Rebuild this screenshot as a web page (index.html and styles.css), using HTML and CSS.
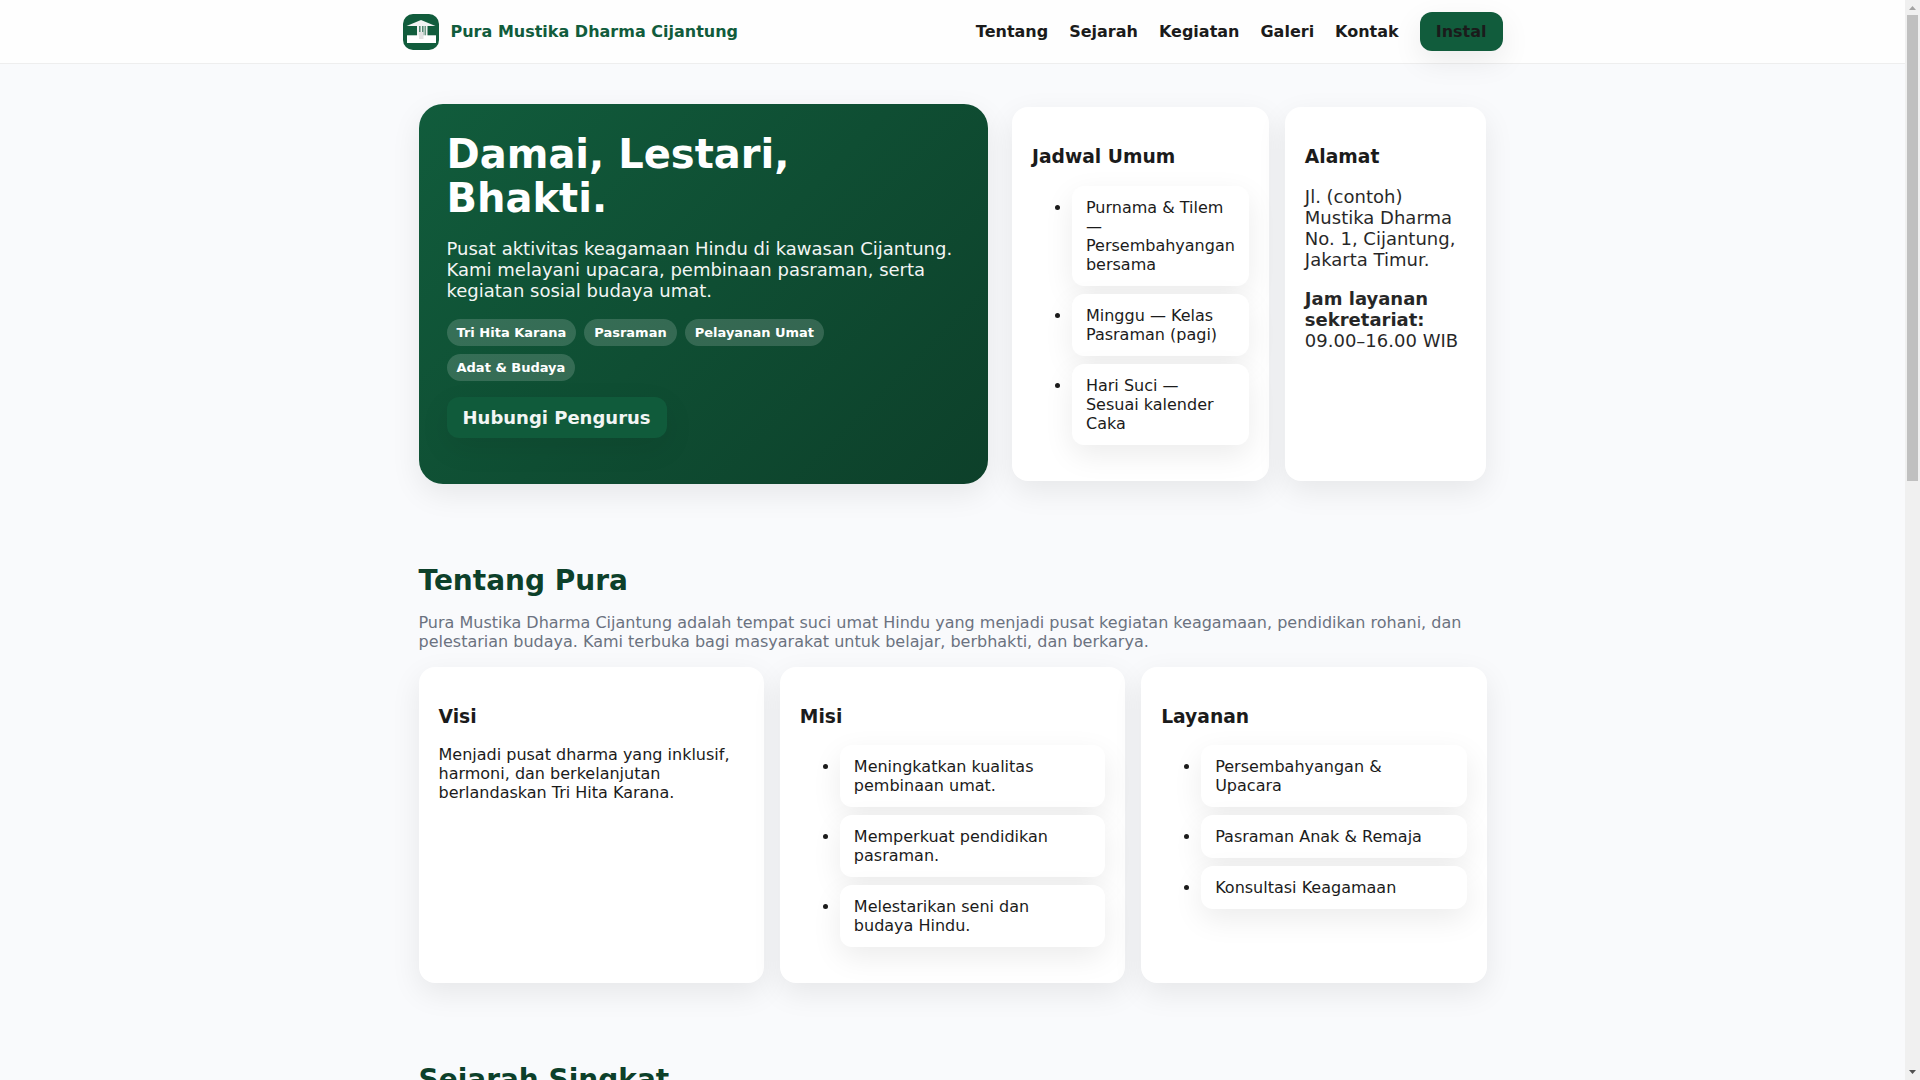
FILE: index.html
```html
<!DOCTYPE html>
<html lang="id">
<head>
    <meta charset="UTF-8">
    <meta name="viewport" content="width=device-width, initial-scale=1.0">
    <meta name="theme-color" content="#115c3c">
    <title>Pura Mustika Dharma Cijantung</title>
    <link rel="stylesheet" href="styles.css">
</head>
<body>
    <div class="page">
        <header class="header">
            <div class="nav">
                <a class="brand" href="#">
                    <svg class="logo" viewBox="0 0 36 36" aria-hidden="true">
                        <rect width="36" height="36" rx="10" fill="#115c3c"/>
                        <path d="M18 6 32.500 12H3.500Z" fill="#f2f2f2"/>
                        <path d="M14 12h2.300v10H14zM17.400 12h1.900v10h-1.900zM20.400 12h1.300v10h-1.300zM22.600 12h1.900v10h-1.900z" fill="#f2f2f2"/>
                        <rect x="4" y="21.300" width="29" height="7.700" fill="#fff"/>
                        <rect x="16" y="18" width="4.500" height="7" fill="#e2e2e2"/>
                    </svg>
                    <span>Pura Mustika Dharma Cijantung</span>
                </a>
                <nav class="menu">
                    <a href="#tentang">Tentang</a>
                    <a href="#sejarah">Sejarah</a>
                    <a href="#kegiatan">Kegiatan</a>
                    <a href="#galeri">Galeri</a>
                    <a href="#kontak">Kontak</a>
                    <a href="#" class="btn">Instal</a>
                </nav>
            </div>
        </header>

        <main>
            <!-- Hero -->
            <section class="section hero">
                <div class="hero-card">
                    <h1>Damai, Lestari, Bhakti.</h1>
                    <p>Pusat aktivitas keagamaan Hindu di kawasan Cijantung. Kami melayani upacara, pembinaan pasraman, serta kegiatan sosial budaya umat.</p>
                    <div class="badges">
                        <span class="badge">Tri Hita Karana</span>
                        <span class="badge">Pasraman</span>
                        <span class="badge">Pelayanan Umat</span>
                        <span class="badge">Adat &amp; Budaya</span>
                    </div>
                    <p class="cta"><a class="btn" href="#kontak">Hubungi Pengurus</a></p>
                </div>
                <div class="info">
                    <div class="card">
                        <h3>Jadwal Umum</h3>
                        <ul class="list">
                            <li>Purnama &amp; Tilem — Persembahyangan bersama</li>
                            <li>Minggu — Kelas Pasraman (pagi)</li>
                            <li>Hari Suci — Sesuai kalender Caka</li>
                        </ul>
                    </div>
                    <div class="card">
                        <h3>Alamat</h3>
                        <p>Jl. (contoh) Mustika Dharma No. 1, Cijantung, Jakarta Timur.</p>
                        <p><strong>Jam layanan sekretariat:</strong> 09.00–16.00 WIB</p>
                    </div>
                </div>
            </section>

            <!-- Tentang -->
            <section class="section" id="tentang">
                <h2>Tentang Pura</h2>
                <p class="muted">Pura Mustika Dharma Cijantung adalah tempat suci umat Hindu yang menjadi pusat kegiatan keagamaan, pendidikan rohani, dan pelestarian budaya. Kami terbuka bagi masyarakat untuk belajar, berbhakti, dan berkarya.</p>
                <div class="cards">
                    <div class="card">
                        <h3>Visi</h3>
                        <p>Menjadi pusat dharma yang inklusif, harmoni, dan berkelanjutan berlandaskan Tri Hita Karana.</p>
                    </div>
                    <div class="card">
                        <h3>Misi</h3>
                        <ul class="list">
                            <li>Meningkatkan kualitas pembinaan umat.</li>
                            <li>Memperkuat pendidikan pasraman.</li>
                            <li>Melestarikan seni dan budaya Hindu.</li>
                        </ul>
                    </div>
                    <div class="card">
                        <h3>Layanan</h3>
                        <ul class="list">
                            <li>Persembahyangan &amp; Upacara</li>
                            <li>Pasraman Anak &amp; Remaja</li>
                            <li>Konsultasi Keagamaan</li>
                        </ul>
                    </div>
                </div>
            </section>

            <!-- Sejarah -->
            <section class="section sejarah" id="sejarah">
                <h2>Sejarah Singkat</h2>
            </section>
        </main>
    </div>

    <!-- Scrollbar -->
    <div class="scrollbar" aria-hidden="true">
        <svg class="arrow" viewBox="0 0 15 15"><path d="M7.500 6 11 10H4Z" fill="#a3a3a3"/></svg>
        <div class="track"><div class="thumb"></div></div>
        <svg class="arrow" viewBox="0 0 15 15"><path d="M4 5h7L7.500 9Z" fill="#505050"/></svg>
    </div>
</body>
</html>
```
FILE: styles.css
```css
:root {
    --green: #115c3c;
    --green-dark: #0d402a;
    --text: #1b1b1b;
    --muted: #6b7280;
    --bg: #f9fafc;
    --shadow: 0 10px 30px rgba(0,0,0,.08);
}
* {
    box-sizing: border-box;
}
html {
    scrollbar-width: none;
}
body {
    margin: 0;
    display: flex;
    align-items: flex-start;
    font-family: "DejaVu Sans", sans-serif;
    color: var(--text);
    background: var(--bg);
}
a {
    color: inherit;
    text-decoration: none;
}
.page {
    flex: 1;
    min-width: 0;
}
.header {
    position: sticky;
    top: 0;
    z-index: 10;
    background: #fefefe;
    border-bottom: 1px solid #eee;
}
.nav {
    max-width: 1100px;
    margin: 0 auto;
    padding: 12px 0;
    display: flex;
    align-items: center;
    justify-content: space-between;
}
.brand {
    display: flex;
    align-items: center;
    gap: 12px;
    font-weight: bold;
    color: var(--green);
}
.logo {
    width: 36px;
    height: 36px;
}
.menu {
    display: flex;
    align-items: center;
    gap: 21px;
    font-weight: bold;
}
.btn {
    display: inline-block;
    padding: 10px 16px;
    border-radius: 12px;
    background: var(--green);
    font-weight: bold;
    box-shadow: var(--shadow);
}
.section {
    max-width: 1100px;
    margin: 0 auto;
    padding: 40px 16px;
}
.hero {
    display: grid;
    grid-template-columns: 1.2fr 1fr;
    gap: 24px;
    align-items: center;
}
.hero-card {
    padding: 28px;
    border-radius: 24px;
    color: #fff;
    background: linear-gradient(135deg, var(--green), var(--green-dark));
    box-shadow: var(--shadow);
}
.hero-card h1 {
    margin: 0;
    font-size: 40px;
    line-height: 44px;
}
.hero p {
    margin: 18px 0;
    font-size: 18px;
    opacity: .95;
}
.badges {
    display: flex;
    flex-wrap: wrap;
    gap: 8px;
}
.badge {
    padding: 6px 10px;
    border-radius: 999px;
    background: rgba(255,255,255,.16);
    font-size: 13px;
    font-weight: bold;
}
.hero .cta {
    margin-top: 16px;
}
.info {
    display: grid;
    grid-template-columns: 1fr 1fr;
    gap: 16px;
}
.card {
    padding: 20px;
    border-radius: 16px;
    background: #fff;
    box-shadow: var(--shadow);
}
.list {
    margin: 16px 0;
    padding-left: 40px;
}
.list li {
    margin: 8px 0;
    padding: 12px 14px;
    border-radius: 12px;
    background: #fff;
    box-shadow: var(--shadow);
}
h2 {
    margin: 0 0 16px;
    font-size: 28px;
    color: var(--green-dark);
}
.muted {
    margin: 16px 0;
    color: var(--muted);
}
.cards {
    display: grid;
    grid-template-columns: repeat(3, 1fr);
    gap: 16px;
}
.sejarah {
    min-height: 127vh;
}
.scrollbar {
    position: sticky;
    top: 0;
    flex: none;
    display: flex;
    flex-direction: column;
    width: 15px;
    height: 100vh;
    background: #f0f0f0;
}
.arrow {
    display: block;
    width: 15px;
    height: 15px;
}
.track {
    flex: 1;
    padding: 0 2px;
}
.thumb {
    height: 44.4%; /* bagian halaman yang terlihat */
    background: #c0c0c0;
}
```
